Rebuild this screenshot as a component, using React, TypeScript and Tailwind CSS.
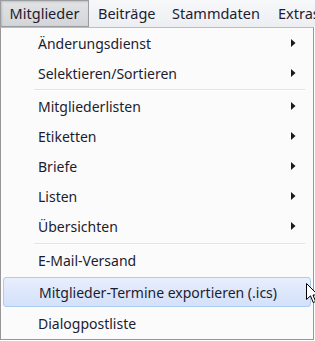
const topMenus = [
  { label: "Beiträge", w: "w-[74px]" },
  { label: "Stammdaten", w: "w-[106px]" },
  { label: "Extras", w: "w-[60px]" },
];

type Entry = { label: string; sub?: boolean; sep?: "h-[3px]" | "h-[4px]"; active?: boolean };

const entries: Entry[] = [
  { label: "Änderungsdienst", sub: true },
  { label: "Selektieren/Sortieren", sub: true },
  { label: "", sep: "h-[3px]" },
  { label: "Mitgliederlisten", sub: true },
  { label: "Etiketten", sub: true },
  { label: "Briefe", sub: true },
  { label: "Listen", sub: true },
  { label: "Übersichten", sub: true },
  { label: "", sep: "h-[4px]" },
  { label: "E-Mail-Versand" },
  { label: "Mitglieder-Termine exportieren (.ics)", active: true },
  { label: "Dialogpostliste" },
];

function Arrow() {
  return (
    <svg width="5" height="8" viewBox="0 0 5 8" className="mr-[17px]">
      <path d="M0 0 L4.5 4 L0 8 Z" fill="#1a1a1a" />
    </svg>
  );
}

function Cursor() {
  return (
    <svg width="13" height="21" viewBox="0 0 13 21" className="absolute left-[306px] top-[283px]">
      <path
        d="M0.5 0.5 L0.5 16.5 L4.5 12.8 L7.2 19.5 L9.6 18.5 L7 12 L12 12 Z"
        fill="#fff"
        stroke="#000"
        strokeWidth="1"
        strokeLinejoin="round"
      />
    </svg>
  );
}

export default function App() {
  return (
    <div
      className="relative w-[315px] h-[341px] overflow-hidden bg-white text-[14px] text-[#1c1c30]"
      style={{ fontFamily: '"Noto Sans", "Open Sans", sans-serif' }}
    >
      <div className="flex h-[27px] items-stretch bg-gradient-to-b from-[#f7f8fa] to-[#eceef2]">
        <div className="flex w-[89px] shrink-0 items-center justify-center border border-[#9a9ca0] bg-gradient-to-b from-[#e2e3e5] to-[#d4d5d8] text-[14.5px] shadow-[inset_1px_1px_2px_rgba(0,0,0,0.15)]">
          Mitglieder
        </div>
        {topMenus.map((m) => (
          <div key={m.label} className={`flex shrink-0 items-center pl-[9px] whitespace-nowrap text-[14.5px] ${m.w}`}>
            {m.label}
          </div>
        ))}
      </div>

      <div className="h-[313px] w-[314px] border border-[#979797] border-t-[#bdbdbd] bg-[#fbfbfb]">
        {entries.map((e, i) =>
          e.sep ? (
            <div key={i} className={`flex items-center pl-[33px] pr-[8px] ${e.sep}`}>
              <div className="h-px w-full bg-[#e2e3e3] shadow-[0_1px_0_#ffffff]" />
            </div>
          ) : e.active ? (
            <div
              key={i}
              className="mx-[2px] mt-[2px] mb-px flex h-[30px] items-center rounded-[3px] border border-[#aecbf0] bg-gradient-to-b from-[#e8effd] to-[#d3e1fa] pl-[35px]"
            >
              {e.label}
            </div>
          ) : (
            <div key={i} className="flex h-[30px] items-center justify-between pl-[37px]">
              <span>{e.label}</span>
              {e.sub && <Arrow />}
            </div>
          )
        )}
      </div>
      <Cursor />
    </div>
  );
}
